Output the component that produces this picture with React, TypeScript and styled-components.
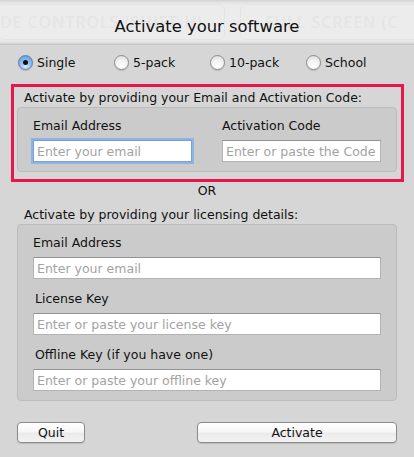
import React from "react"
import styled, { createGlobalStyle, css } from "styled-components"

const GlobalStyle = createGlobalStyle`
  html, body {
    margin: 0;
    padding: 0;
    background: #d6d6d6;
  }
  body {
    font-family: "DejaVu Sans", "Liberation Sans", sans-serif;
    color: #1a1a1a;
  }
`

const licenseOptions = ["Single", "5-pack", "10-pack", "School"]

const App: React.FC = () => {
  return (
    <Window>
      <GlobalStyle />
      <TitleBar>
        <GhostRow>
          <GhostPill $width={227} $indent={1}>DE CONTROLS (SHIFT-H)</GhostPill>
          <GhostPill $width={200} $indent={24}>FULL SCREEN (C</GhostPill>
        </GhostRow>
        <Title>Activate your software</Title>
      </TitleBar>

      <RadioRow>
        {licenseOptions.map((opt, i) => (
          <RadioOption key={opt}>
            <RadioDot $checked={i === 0} />
            <span>{opt}</span>
          </RadioOption>
        ))}
      </RadioRow>

      <Highlight>
        <SectionLabel>Activate by providing your Email and Activation Code:</SectionLabel>
        <GroupBox $columns>
          <Field>
            <FieldLabel>Email Address</FieldLabel>
            <TextInput placeholder="Enter your email" $focused />
          </Field>
          <Field>
            <FieldLabel>Activation Code</FieldLabel>
            <TextInput placeholder="Enter or paste the Code" />
          </Field>
        </GroupBox>
      </Highlight>

      <OrText>OR</OrText>

      <Section>
        <SectionLabel>Activate by providing your licensing details:</SectionLabel>
        <GroupBox>
          <Field>
            <FieldLabel>Email Address</FieldLabel>
            <TextInput placeholder="Enter your email" />
          </Field>
          <Field>
            <FieldLabel $indent>License Key</FieldLabel>
            <TextInput placeholder="Enter or paste your license key" />
          </Field>
          <Field>
            <FieldLabel $indent>Offline Key (if you have one)</FieldLabel>
            <TextInput placeholder="Enter or paste your offline key" />
          </Field>
        </GroupBox>
      </Section>

      <ButtonRow>
        <PushButton $width={68}>Quit</PushButton>
        <PushButton $width={200}>Activate</PushButton>
      </ButtonRow>
    </Window>
  )
}

export default App


const Window = styled.div`
  width: 414px;
  height: 457px;
  overflow: hidden;
  background: #d6d6d6;
  display: flex;
  flex-direction: column;
  font-size: 12.5px;
`

const TitleBar = styled.div`
  display: grid;
  grid-template-columns: minmax(0, 1fr);
  height: 44px;
  background: linear-gradient(to bottom, #d2d2d2 0px, #e6e6e6 3px, #ececec 6px, #ececec 40px, #dedede 43px, #cdcdcd 44px);
  border-bottom: 1px solid #c6c6c6;
  overflow: hidden;
`

const GhostRow = styled.div`
  grid-area: 1 / 1;
  display: flex;
  gap: 15px;
  margin-left: -2px;
  padding-top: 4px;
  height: 36px;
  min-width: 0;
  overflow: hidden;
`

const GhostPill = styled.div<{ $width: number; $indent: number }>`
  flex: none;
  box-sizing: border-box;
  width: ${p => p.$width}px;
  padding-left: ${p => p.$indent}px;
  border: 1px solid #e4e4e4;
  border-radius: 6px;
  color: #e5e5e5;
  font-family: "Open Sans", "DejaVu Sans", sans-serif;
  font-weight: 600;
  font-size: 16px;
  letter-spacing: 0.9px;
  display: flex;
  align-items: center;
  white-space: nowrap;
`

const Title = styled.div`
  grid-area: 1 / 1;
  align-self: center;
  justify-self: center;
  font-size: 16.4px;
  color: #111;
  padding-top: 9px;
  white-space: nowrap;
`

const RadioRow = styled.div`
  display: flex;
  height: 20px;
  margin-top: 7px;
  padding-left: 18px;
  align-items: center;
`

const RadioOption = styled.label`
  width: 96px;
  display: flex;
  align-items: center;
  gap: 4px;
  color: #111;
`

const RadioDot = styled.span<{ $checked?: boolean }>`
  position: relative;
  width: 13px;
  height: 13px;
  border-radius: 50%;
  border: 1px solid #8d8d8d;
  background: radial-gradient(circle at 50% 75%, #ffffff 0%, #f4f4f4 45%, #d5d5d5 100%);
  box-shadow: 0 1px 1px rgba(0, 0, 0, 0.15);

  ${p => p.$checked && css`
    border-color: #5b7fae;
    background: radial-gradient(circle at 50% 80%, #d9ecff 0%, #8fbdf0 45%, #5a93d6 100%);
    &::after {
      content: "";
      position: absolute;
      left: 4px;
      top: 4px;
      width: 5px;
      height: 5px;
      border-radius: 50%;
      background: #101010;
    }
  `}
`

const Highlight = styled.div`
  margin: 12px 10px 0 11px;
  border: 3px solid #e8174b;
  padding: 3px 4px 7px 3px;
`

const Section = styled.div`
  margin: 8px 17px 0 14px;
  padding-left: 3px;
`

const SectionLabel = styled.div`
  line-height: 16px;
  padding-left: 7px;
  color: #111;
  white-space: nowrap;
`

const GroupBox = styled.div<{ $columns?: boolean }>`
  margin-top: 1px;
  background: #cbcbcb;
  border: 1px solid #bcbcbc;
  border-radius: 4px;
  padding: 10px 15px 9px 15px;
  display: grid;
  ${p => p.$columns
    ? css`
      grid-template-columns: 1fr 1fr;
      column-gap: 30px;
    `
    : css`
      row-gap: 12px;
    `}
`

const Field = styled.div`
  display: flex;
  flex-direction: column;
  gap: 6px;
`

const FieldLabel = styled.div<{ $indent?: boolean }>`
  line-height: 16px;
  padding-left: ${p => (p.$indent ? 2 : 0)}px;
  color: #111;
  white-space: nowrap;
`

const TextInput = styled.input<{ $focused?: boolean }>`
  box-sizing: border-box;
  height: 22px;
  width: 100%;
  margin: 0;
  padding: 1px 3px 0;
  background: #ffffff;
  border: 1px solid #b2b2b2;
  border-top-color: #929292;
  border-radius: 0;
  font-family: inherit;
  font-size: 12.5px;
  color: #111;
  outline: none;

  &::placeholder {
    color: #a3a3a3;
  }

  ${p => p.$focused && css`
    border-color: #7b9fd0;
    box-shadow: 0 0 0 2px #8cb4e6;
  `}
`

const OrText = styled.div`
  margin-top: 1px;
  line-height: 16px;
  text-align: center;
  color: #111;
`

const ButtonRow = styled.div`
  display: flex;
  justify-content: space-between;
  margin: 21px 17px 0 17px;
`

const PushButton = styled.button<{ $width: number }>`
  width: ${p => p.$width}px;
  height: 21px;
  margin: 0;
  padding: 0;
  border: 1px solid #8a8a8a;
  border-radius: 4px;
  background: linear-gradient(to bottom, #ffffff 0%, #f7f7f7 45%, #ebebeb 55%, #f3f3f3 100%);
  box-shadow: 0 1px 1px rgba(0, 0, 0, 0.12);
  font-family: inherit;
  font-size: 12.5px;
  color: #111;
`
